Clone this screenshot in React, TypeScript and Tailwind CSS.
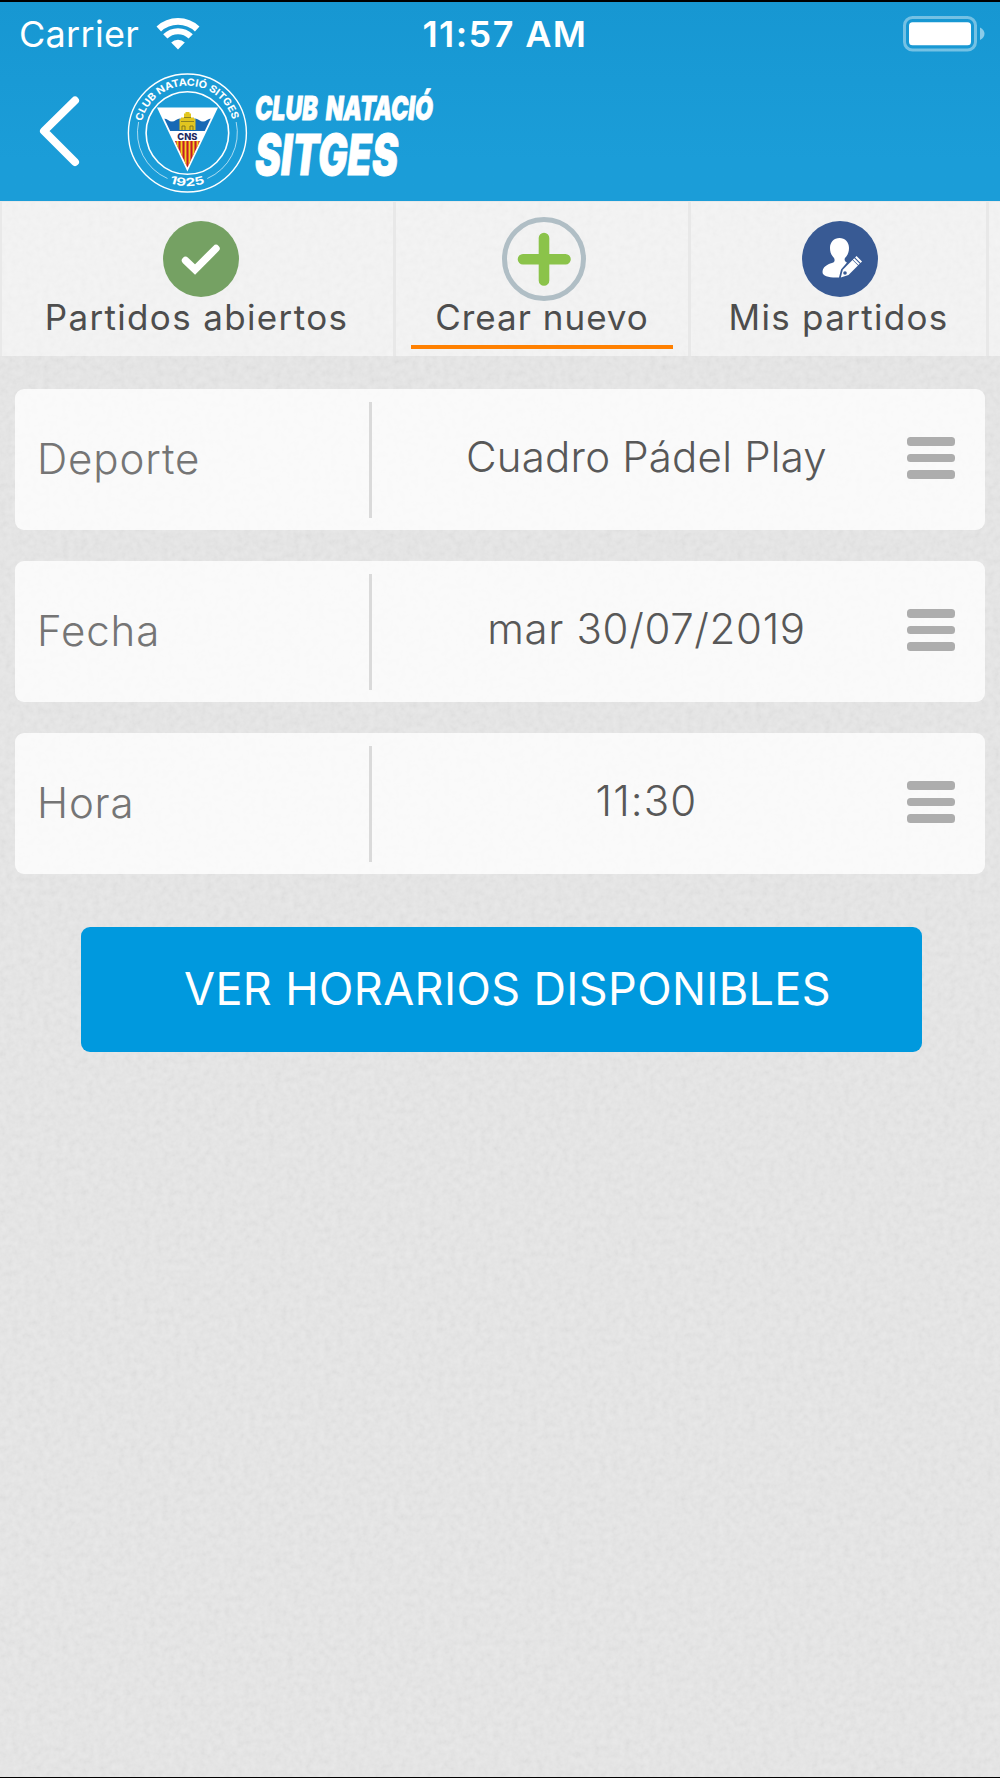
import React from 'react';

type Tab = {
  label: string;
  icon: React.ReactNode;
  width: string;
  spacing: string;
  iconOffset?: string;
  active?: boolean;
};

type Field = {
  label: string;
  value: string;
  height: string;
  labelSpacing: string;
  valueSpacing: string;
};

const WifiIcon = () => (
  <svg width="44" height="32" viewBox="0 0 44 32" fill="none" className="block">
    <path d="M2.8 11A28 28 0 0 1 41.2 11" stroke="white" strokeWidth="6.6" />
    <path d="M9.3 18.4A18 18 0 0 1 34.7 18.4" stroke="white" strokeWidth="6" />
    <path d="M22 31.4L15.2 24.6A9.8 9.8 0 0 1 28.8 24.6Z" fill="white" />
  </svg>
);

const BatteryIcon = () => (
  <svg width="82" height="36" viewBox="0 0 82 36" className="block">
    <rect x="1.5" y="1.5" width="71" height="32.5" rx="8" fill="none" stroke="white" strokeOpacity="0.4" strokeWidth="3" />
    <rect x="6" y="6.3" width="62" height="23" rx="3.5" fill="white" />
    <path d="M77 11.5C83 14 83 21.5 77 24Z" fill="white" fillOpacity="0.5" />
  </svg>
);

const ClubLogo = () => (
  <svg width="340" height="130" viewBox="125 66 340 130" className="block overflow-visible">
    <defs>
      <path id="crest-top" d="M141.9 121.5A46.8 46.8 0 0 1 232.9 121.5" />
      <path id="crest-bottom" d="M160 178.5A53 53 0 0 0 214.6 178.5" />
      <clipPath id="crest-shield">
        <path d="M160 109.5H215L187.4 167.5Z" />
      </clipPath>
    </defs>
    <g fill="none" stroke="white">
      <circle cx="187.4" cy="133" r="59" strokeWidth="1.4" />
      <circle cx="187.4" cy="133" r="41.3" strokeWidth="1.6" />
      <path d="M138.6 122A50 50 0 0 0 167.5 178.5" strokeWidth="0.8" strokeOpacity="0.8" />
      <path d="M236.2 122A50 50 0 0 1 207.3 178.5" strokeWidth="0.8" strokeOpacity="0.8" />
    </g>
    <text fill="white" fontFamily="Inter, sans-serif" fontSize="10" fontWeight="700">
      <textPath href="#crest-top" textLength="123" lengthAdjust="spacingAndGlyphs">CLUB NATACIÓ SITGES</textPath>
    </text>
    <text fill="white" fontFamily="Inter, sans-serif" fontSize="11" fontWeight="700">
      <textPath href="#crest-bottom" startOffset="10.5" textLength="36" lengthAdjust="spacingAndGlyphs">1925</textPath>
    </text>
    <path d="M157 107.5H218L187.4 171.5Z" fill="white" />
    <g clipPath="url(#crest-shield)">
      <path d="M160 121Q164 117 168 120T176 120T184 120H191Q195 117 199 120T207 120T216 120V131H160Z" fill="#1769b5" />
      <g fill="#e2c61f">
        <path d="M179.5 130V119H181V117.5H184V113.5H185.5V112H189.5V113.5H191V117.5H194V119H195.5V130Z" />
        <path d="M182 130V126H185V130M190 130V126H193V130" stroke="#6c6422" strokeWidth="0.8" fill="none" />
        <path d="M181 121.5H194M184 117.5H191" stroke="#6c6422" strokeWidth="0.7" />
      </g>
      <rect x="170" y="141" width="36" height="28" fill="#c4192b" />
      <path d="M177.5 141V168M181.5 141V168M185.5 141V168M189.5 141V168M193.5 141V168M197.5 141V168" stroke="#f3cf20" strokeWidth="1.9" />
    </g>
    <text x="177.3" y="139.5" fill="#20275f" fontFamily="Inter, sans-serif" fontSize="9.5" fontWeight="800" textLength="20" lengthAdjust="spacingAndGlyphs">
      CNS
    </text>
    <g fill="white" stroke="white" strokeWidth="0.8" fontFamily="Inter, sans-serif" fontWeight="900" fontStyle="italic">
      <text x="255" y="120" fontSize="33" wordSpacing="5" textLength="178" lengthAdjust="spacingAndGlyphs">CLUB NATACIÓ</text>
      <text x="255" y="175" fontSize="57" textLength="143" lengthAdjust="spacingAndGlyphs">SITGES</text>
    </g>
  </svg>
);

const CheckIcon = () => (
  <svg width="84" height="84" viewBox="0 0 84 84" className="block">
    <circle cx="42" cy="42" r="38" fill="#75a163" />
    <path d="M26.5 43.5L36 52.5L57 31.5" fill="none" stroke="white" strokeWidth="7.4" strokeLinecap="round" />
  </svg>
);

const PlusIcon = () => (
  <svg width="84" height="84" viewBox="0 0 84 84" className="block">
    <circle cx="42" cy="42" r="39.5" fill="none" stroke="#b0bec5" strokeWidth="5" />
    <path d="M42 21V63.5M21 42.2H63.5" stroke="#8bc34a" strokeWidth="10.6" strokeLinecap="round" />
  </svg>
);

const UserEditIcon = () => (
  <svg width="84" height="84" viewBox="0 0 84 84" className="block">
    <circle cx="42" cy="42" r="38" fill="#385a94" />
    <path
      d="M41.5 21C47 21 51 25 51 31C51 36 49 39 47 41C46 43 47 45 49 45.5L43 52.5L41 60.5C32 61 24.5 59.5 24.5 55C24.5 50 29 47.5 34 46C37 45 37 43 36 41C33.5 38.5 32 35.5 32 31C32 25 36 21 41.5 21Z"
      fill="white"
    />
    <path d="M42.8 60.5L44.8 52.8L54.5 43L60 48.5L50.5 58Z" fill="white" />
    <path d="M55.6 41.9L61.1 47.4M57.8 39.7L63.3 45.2" stroke="white" strokeWidth="2" />
    <circle cx="47" cy="56" r="1.8" fill="#385a94" />
  </svg>
);

const MenuIcon = () => (
  <div className="flex w-12 flex-col gap-2 pb-[3px]">
    <div className="h-[8.4px] rounded-[3.5px] bg-[#adadad]" />
    <div className="h-[8.4px] rounded-[3.5px] bg-[#adadad]" />
    <div className="h-[8.4px] rounded-[3.5px] bg-[#adadad]" />
  </div>
);

// Fine paper grain behind the whole screen
const PaperGrain = () => (
  <svg className="absolute inset-0 h-full w-full opacity-[0.07]">
    <filter id="grain">
      <feTurbulence type="fractalNoise" baseFrequency="0.16" numOctaves="3" seed="4" />
      <feColorMatrix type="matrix" values="1 0 0 0 0  1 0 0 0 0  1 0 0 0 0  0 0 0 0 1" />
    </filter>
    <rect width="100%" height="100%" filter="url(#grain)" />
  </svg>
);

const tabs: Tab[] = [
  { label: 'Partidos abiertos', icon: <CheckIcon />, width: 'w-[394px]', spacing: 'mr-[2px] tracking-[1.35px]', iconOffset: 'ml-[6px]' },
  { label: 'Crear nuevo', icon: <PlusIcon />, width: 'w-[295px]', spacing: 'tracking-[1px]', iconOffset: 'ml-[4px]', active: true },
  { label: 'Mis partidos', icon: <UserEditIcon />, width: 'w-[298px]', spacing: 'tracking-[1.3px]', iconOffset: 'ml-[3px]' },
];

const fields: Field[] = [
  { label: 'Deporte', value: 'Cuadro Pádel Play', height: 'h-[141px]', labelSpacing: 'tracking-[0.9px]', valueSpacing: 'tracking-[0.2px]' },
  { label: 'Fecha', value: 'mar 30/07/2019', height: 'h-[141px]', labelSpacing: 'tracking-[0.9px]', valueSpacing: 'tracking-[0.65px]' },
  { label: 'Hora', value: '11:30', height: 'h-[141px]', labelSpacing: 'tracking-[0.8px]', valueSpacing: 'tracking-[1.1px]' },
];

const TabItem = ({ tab }: { tab: Tab }) => (
  <button type="button" className={`flex h-full shrink-0 flex-col items-center border-r-[3px] border-[#e8e8e8] pt-[15px] ${tab.width}`}>
    <span className={tab.iconOffset}>{tab.icon}</span>
    <span className={`-mt-[5px] whitespace-nowrap text-[35px] leading-[42px] text-[#4d4d4d] ${tab.spacing}`}>{tab.label}</span>
    {tab.active && <span className="mt-[7px] h-[4px] w-[262px] bg-[#ff8000]" />}
  </button>
);

const FieldRow = ({ field }: { field: Field }) => (
  <div className={`flex items-center rounded-[9px] bg-white/80 ${field.height}`}>
    <div className={`w-[354px] pb-[2px] pl-[22px] text-[42px] font-light leading-[50px] text-[#757575] ${field.labelSpacing}`}>{field.label}</div>
    <div className="h-[116px] w-[3px] bg-[#dadada]" />
    <div className={`w-[535px] pb-[6px] pl-[14px] text-center text-[42px] font-light leading-[50px] text-[#585858] ${field.valueSpacing}`}>
      {field.value}
    </div>
    <MenuIcon />
  </div>
);

export default function App() {
  return (
    <div className="relative flex h-[1778px] w-[1000px] flex-col overflow-hidden border-b border-t-2 border-black bg-[#e8e8e8] font-['Inter','Liberation_Sans',sans-serif]">
      <PaperGrain />
      <header className="relative h-[199px] bg-linear-to-b from-[#1797d2] to-[#1b9dd8] to-80% text-white">
        <div className="grid h-[64px] grid-cols-3 items-center pl-[19px] pr-[15px]">
          <div className="flex items-center gap-[17px]">
            <span className="text-[36px] leading-[44px] tracking-[0.3px]">Carrier</span>
            <WifiIcon />
          </div>
          <span className="pl-[6px] text-center text-[36px] font-semibold leading-[44px] tracking-[1.4px]">11:57 AM</span>
          <div className="flex justify-end">
            <BatteryIcon />
          </div>
        </div>
        <div className="flex items-center pl-[38px]">
          <svg width="44" height="72" viewBox="0 0 44 72" fill="none" className="mr-[43px] block">
            <path d="M37 5.5L6 36L37 67" stroke="white" strokeWidth="8" strokeLinecap="round" strokeLinejoin="round" />
          </svg>
          <ClubLogo />
        </div>
      </header>

      <nav className="relative flex h-[155px] border-l-2 border-t border-[#e9e9e9] bg-white/50">
        {tabs.map((tab) => (
          <TabItem key={tab.label} tab={tab} />
        ))}
      </nav>

      <main className="relative px-[15px] pt-[33px]">
        <div className="flex flex-col gap-[31px]">
          {fields.map((field) => (
            <FieldRow key={field.label} field={field} />
          ))}
        </div>
        <button
          type="button"
          className="ml-[66px] mt-[53px] flex h-[125px] w-[841px] items-center justify-center rounded-[9px] bg-[#0099de] pb-[1px] pl-[12px] text-[45px] leading-[54px] tracking-[0.38px] text-white"
        >
          VER HORARIOS DISPONIBLES
        </button>
      </main>
    </div>
  );
}
